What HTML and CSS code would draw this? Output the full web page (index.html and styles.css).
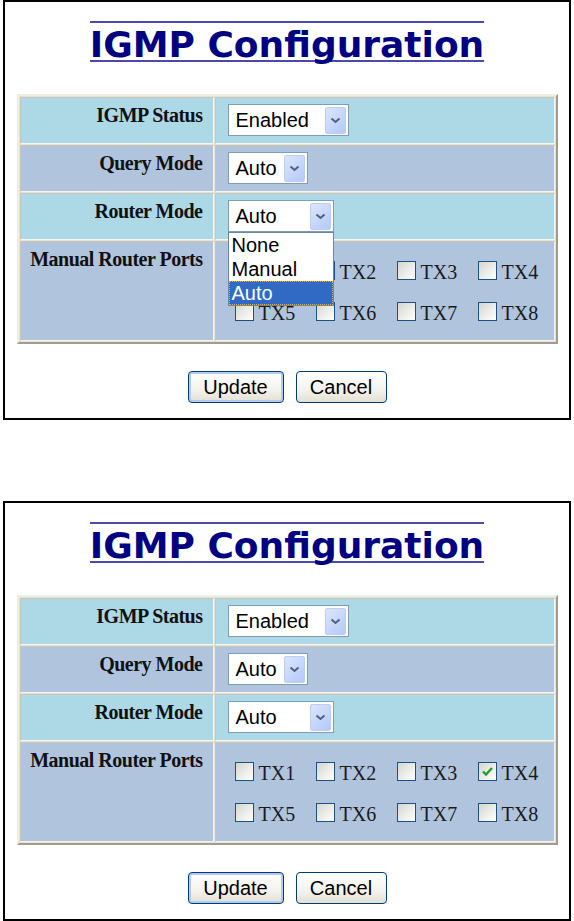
FILE: index.html
```html
<!DOCTYPE html>
<html lang="en">
<head>
    <meta charset="UTF-8">
    <title>IGMP Configuration</title>
    <link rel="stylesheet" href="styles.css">
</head>
<body>

<!-- Ansicht 1: Router Mode Auswahl geöffnet -->
<div class="panel">
    <div class="title-wrap">
        <h1 class="title">IGMP Configuration</h1>
    </div>
    <table class="config">
        <tr class="row-a">
            <th>IGMP Status</th>
            <td>
                <span class="select w-status"><span class="select-text">Enabled</span><span class="select-arrow"><svg width="11" height="7" viewBox="0 0 11 7"><path d="M1.5 1.5 L5.5 5 L9.5 1.5" fill="none" stroke="#4d6185" stroke-width="2"/></svg></span></span>
            </td>
        </tr>
        <tr class="row-b">
            <th>Query Mode</th>
            <td>
                <span class="select w-query"><span class="select-text">Auto</span><span class="select-arrow"><svg width="11" height="7" viewBox="0 0 11 7"><path d="M1.5 1.5 L5.5 5 L9.5 1.5" fill="none" stroke="#4d6185" stroke-width="2"/></svg></span></span>
            </td>
        </tr>
        <tr class="row-a">
            <th>Router Mode</th>
            <td>
                <span class="select w-router"><span class="select-text">Auto</span><span class="select-arrow"><svg width="11" height="7" viewBox="0 0 11 7"><path d="M1.5 1.5 L5.5 5 L9.5 1.5" fill="none" stroke="#4d6185" stroke-width="2"/></svg></span>
                    <ul class="dropdown">
                        <li>None</li>
                        <li>Manual</li>
                        <li class="selected">Auto</li>
                    </ul>
                </span>
            </td>
        </tr>
        <tr class="row-b">
            <th>Manual Router Ports</th>
            <td>
                <div class="ports">
                    <label class="port"><span class="box"></span><span class="port-name">TX1</span></label>
                    <label class="port"><span class="box"></span><span class="port-name">TX2</span></label>
                    <label class="port"><span class="box"></span><span class="port-name">TX3</span></label>
                    <label class="port"><span class="box"></span><span class="port-name">TX4</span></label>
                    <label class="port"><span class="box"></span><span class="port-name">TX5</span></label>
                    <label class="port"><span class="box"></span><span class="port-name">TX6</span></label>
                    <label class="port"><span class="box"></span><span class="port-name">TX7</span></label>
                    <label class="port"><span class="box"></span><span class="port-name">TX8</span></label>
                </div>
            </td>
        </tr>
    </table>
    <div class="buttons">
        <button class="btn btn-default w-update">Update</button>
        <button class="btn w-cancel">Cancel</button>
    </div>
</div>

<!-- Ansicht 2: TX4 ausgewählt -->
<div class="panel">
    <div class="title-wrap">
        <h1 class="title">IGMP Configuration</h1>
    </div>
    <table class="config">
        <tr class="row-a">
            <th>IGMP Status</th>
            <td>
                <span class="select w-status"><span class="select-text">Enabled</span><span class="select-arrow"><svg width="11" height="7" viewBox="0 0 11 7"><path d="M1.5 1.5 L5.5 5 L9.5 1.5" fill="none" stroke="#4d6185" stroke-width="2"/></svg></span></span>
            </td>
        </tr>
        <tr class="row-b">
            <th>Query Mode</th>
            <td>
                <span class="select w-query"><span class="select-text">Auto</span><span class="select-arrow"><svg width="11" height="7" viewBox="0 0 11 7"><path d="M1.5 1.5 L5.5 5 L9.5 1.5" fill="none" stroke="#4d6185" stroke-width="2"/></svg></span></span>
            </td>
        </tr>
        <tr class="row-a">
            <th>Router Mode</th>
            <td>
                <span class="select w-router"><span class="select-text">Auto</span><span class="select-arrow"><svg width="11" height="7" viewBox="0 0 11 7"><path d="M1.5 1.5 L5.5 5 L9.5 1.5" fill="none" stroke="#4d6185" stroke-width="2"/></svg></span></span>
            </td>
        </tr>
        <tr class="row-b">
            <th>Manual Router Ports</th>
            <td>
                <div class="ports">
                    <label class="port"><span class="box"></span><span class="port-name">TX1</span></label>
                    <label class="port"><span class="box"></span><span class="port-name">TX2</span></label>
                    <label class="port"><span class="box"></span><span class="port-name">TX3</span></label>
                    <label class="port"><span class="box checked"><svg width="17" height="17" viewBox="0 0 17 17"><path d="M4 8.5 L7 11.5 L13 5" fill="none" stroke="#21a121" stroke-width="2.4"/></svg></span><span class="port-name">TX4</span></label>
                    <label class="port"><span class="box"></span><span class="port-name">TX5</span></label>
                    <label class="port"><span class="box"></span><span class="port-name">TX6</span></label>
                    <label class="port"><span class="box"></span><span class="port-name">TX7</span></label>
                    <label class="port"><span class="box"></span><span class="port-name">TX8</span></label>
                </div>
            </td>
        </tr>
    </table>
    <div class="buttons">
        <button class="btn btn-default w-update">Update</button>
        <button class="btn w-cancel">Cancel</button>
    </div>
</div>

</body>
</html>
```

FILE: styles.css
```css
body {
    margin: 0;
    padding: 0;
    background-color: #ffffff;
    font-family: "Liberation Sans", Arial, sans-serif;
}
.panel {
    box-sizing: border-box;
    width: 568px;
    height: 420px;
    margin-left: 3px;
    border: 2px solid #000000;
    padding-top: 19px;
}
.panel + .panel {
    margin-top: 81px;
}
.title-wrap {
    display: flex;
    justify-content: center;
}
.title {
    margin: 0;
    padding-top: 6px;
    font-family: "DejaVu Sans", Verdana, sans-serif;
    font-size: 36px;
    font-weight: bold;
    line-height: 31px;
    color: #000080;
    border-top: 2px solid #4a4aa8;
    border-bottom: 2px solid #4a4aa8;
}
.config {
    width: 541px;
    margin: 32px auto 0 auto;
    table-layout: fixed;
    border-collapse: separate;
    border-spacing: 1px;
    background-color: #e4e1d5;
    border: 2px solid;
    border-color: #efede4 #a09c8f #a09c8f #efede4;
}
.config th,
.config td {
    border: 1px solid;
    border-color: #c9c5b7 #f6f5ef #f6f5ef #c9c5b7;
    vertical-align: top;
}
.config th {
    width: 182px;
    padding: 6px 10px 0 0;
    font-family: "Liberation Serif", "Times New Roman", serif;
    font-size: 20px;
    font-weight: bold;
    line-height: 23px;
    letter-spacing: -0.5px;
    text-align: right;
    white-space: nowrap;
    color: #111111;
}
.config td {
    padding: 6px 0 7px 12px;
}
.row-a th, .row-a td {
    background-color: #add8e6;
}
.row-b th, .row-b td {
    background-color: #b0c4de;
}

/* Auswahlfelder */
.select {
    position: relative;
    box-sizing: border-box;
    display: inline-flex;
    height: 32px;
    background-color: #ffffff;
    border: 1px solid #7f9db9;
    font-size: 20px;
    line-height: 30px;
    color: #000000;
    vertical-align: top;
}
.w-status { width: 121px; }
.w-query { width: 80px; }
.w-router { width: 106px; }
.select-text {
    flex: 1;
    padding-left: 7px;
}
.select-arrow {
    box-sizing: border-box;
    width: 21px;
    height: 27px;
    margin: 2px 2px 1px 0;
    display: flex;
    align-items: center;
    justify-content: center;
    border: 1px solid #bccdf6;
    border-radius: 2px;
    background: linear-gradient(135deg, #dbe5fd, #b5c9f7);
}
.dropdown {
    position: absolute;
    top: 31px;
    left: -1px;
    width: 106px;
    box-sizing: border-box;
    margin: 0;
    padding: 0;
    list-style: none;
    background-color: #ffffff;
    border: 1px solid #6d86a6;
    z-index: 2;
}
.dropdown li {
    height: 24px;
    padding-left: 3px;
    line-height: 24px;
}
.dropdown li.selected {
    background-color: #316ac5;
    color: #ffffff;
    outline: 1px dotted #d8b24a;
    outline-offset: -1px;
}

/* Ports */
.ports {
    display: grid;
    grid-template-columns: 81px 81px 81px auto;
    grid-auto-rows: 19px;
    row-gap: 22px;
    padding: 13px 0 12px 7px;
}
.port {
    display: flex;
    align-items: flex-start;
    font-family: "Liberation Serif", "Times New Roman", serif;
    font-size: 20px;
    color: #1a1a1a;
}
.box {
    box-sizing: border-box;
    width: 19px;
    height: 19px;
    flex: none;
    border: 1px solid #1c5180;
    background: linear-gradient(135deg, #d6d6cf, #ffffff);
    display: flex;
    align-items: center;
    justify-content: center;
}
.port-name {
    margin-left: 5px;
    line-height: 19px;
    padding-top: 2px;
}

/* Buttons */
.buttons {
    display: flex;
    justify-content: center;
    gap: 12px;
    margin-top: 27px;
}
.btn {
    box-sizing: border-box;
    height: 32px;
    padding: 0;
    border: 1px solid #003c74;
    border-radius: 4px;
    background: linear-gradient(#ffffff, #f3f2ec 60%, #e3e0d3);
    font-family: "Liberation Sans", Arial, sans-serif;
    font-size: 20px;
    color: #000000;
}
.btn-default {
    box-shadow: inset 0 0 0 2px #b3cbef;
}
.w-update { width: 96px; }
.w-cancel { width: 91px; }
```
